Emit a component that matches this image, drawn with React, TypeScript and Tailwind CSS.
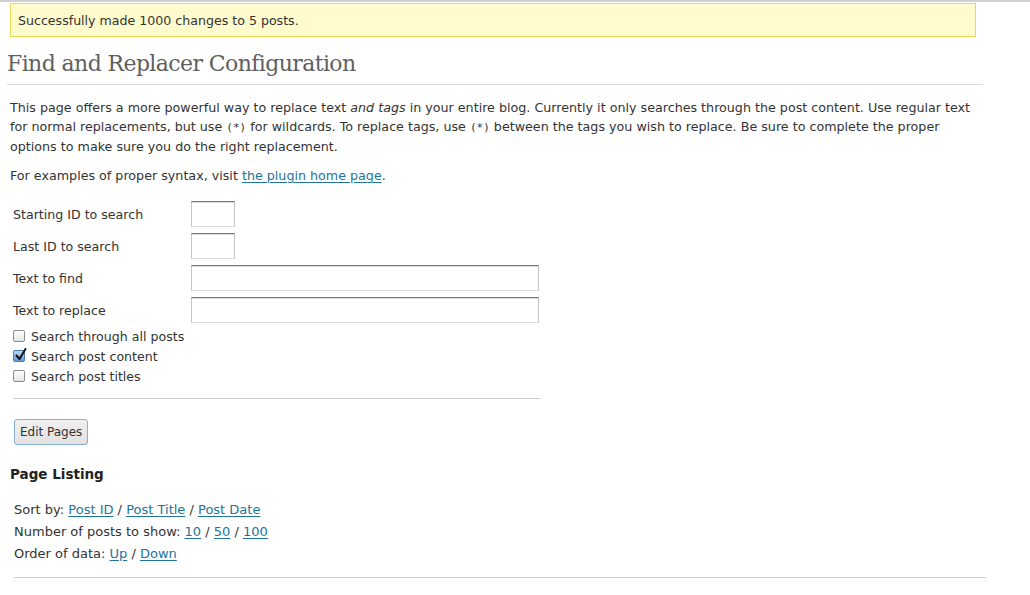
import React from "react";

function Box({ checked }: { checked?: boolean }) {
  if (checked) {
    return (
      <span className="relative inline-block w-[12px] h-[12px] rounded-[2px] border border-[#4a7fb0] bg-gradient-to-b from-[#bcd8f3] to-[#5d9ad6] mr-[6px] shrink-0">
        <svg className="absolute left-[1px] top-[-3px]" width="12" height="13" viewBox="0 0 12 13">
          <path d="M1.5 7.5 L4.5 11 L10.5 1" fill="none" stroke="#111" strokeWidth="2" strokeLinecap="round" strokeLinejoin="round" />
        </svg>
      </span>
    );
  }
  return (
    <span className="inline-block w-[12px] h-[12px] rounded-[2px] border border-[#8a8a8a] bg-gradient-to-b from-[#ffffff] to-[#e4e4e4] mr-[6px] shrink-0" />
  );
}

function Input({ w }: { w: string }) {
  return (
    <div
      className={`${w} h-[26px] border border-t-[#7b7b7b] border-l-[#c4c4c4] border-r-[#c4c4c4] border-b-[#dddddd] bg-white shadow-[inset_0_1px_0_#d8d8d8]`}
    />
  );
}

const link = "text-[#21759b] underline underline-offset-2";

export default function App() {
  return (
    <div className="min-h-[595px] bg-white text-[#333] text-[12px] leading-[19px] font-['DejaVu_Sans',sans-serif]">
      <div className="h-[2px] bg-[#d0d0d0]" />
      <div className="pt-px">
        <div className="ml-[10px] w-[966px] h-[34px] border border-[#e6db55] bg-[#fffbcc] flex items-center pl-[7px] text-[12.6px]">
          Successfully made 1000 changes to 5 posts.
        </div>
      </div>
      <div className="ml-[7px] mr-[47px] mt-[12px] border-b border-[#dadada] pb-[5px]">
        <h2 className="font-['DejaVu_Serif',serif] text-[22px] leading-[30px] text-[#5f5f5f] tracking-[-0.6px]">
          Find and Replacer Configuration
        </h2>
      </div>
      <div className="pl-[10px] pr-[40px] mt-[13px] text-[12.7px]">
        <p>
          This page offers a more powerful way to replace text <em>and tags</em> in your entire blog. Currently it only searches through the post content. Use regular text for normal replacements, but use{" "}
          <code className="font-['DejaVu_Sans_Mono',monospace] text-[11px]">(*)</code> for wildcards. To replace tags, use{" "}
          <code className="font-['DejaVu_Sans_Mono',monospace] text-[11px]">(*)</code> between the tags you wish to replace. Be sure to complete the proper options to make sure you do the right replacement.
        </p>
        <p className="mt-[10px]">
          For examples of proper syntax, visit <a className={link}>the plugin home page</a>.
        </p>
      </div>
      <div className="pl-[13px] mt-[16px] w-[540px] text-[12.6px]">
        <div className="flex flex-col gap-[6px]">
          <div className="flex items-center h-[26px]">
            <span className="w-[178px] pt-px">Starting ID to search</span>
            <Input w="w-[44px]" />
          </div>
          <div className="flex items-center h-[26px]">
            <span className="w-[178px] pt-px">Last ID to search</span>
            <Input w="w-[44px]" />
          </div>
          <div className="flex items-center h-[26px]">
            <span className="w-[178px] pt-px">Text to find</span>
            <Input w="w-[348px]" />
          </div>
          <div className="flex items-center h-[26px]">
            <span className="w-[178px] pt-px">Text to replace</span>
            <Input w="w-[348px]" />
          </div>
        </div>
        <div className="mt-[3px] flex flex-col">
          <label className="flex items-center h-[20px]"><Box />Search through all posts</label>
          <label className="flex items-center h-[20px]"><Box checked />Search post content</label>
          <label className="flex items-center h-[20px]"><Box />Search post titles</label>
        </div>
        <div className="mt-[12px] h-px bg-[#cccccc] w-[527px]" />
      </div>
      <div className="pl-[14px] mt-[20px]">
        <button className="h-[26px] px-[5px] rounded-[3px] border border-[#88b0cf] bg-gradient-to-b from-[#f0f0f0] to-[#e2e2e2] text-[12px] text-[#333]">
          Edit Pages
        </button>
      </div>
      <h3 className="pl-[10px] mt-[19px] text-[13.5px] leading-[20px] font-bold text-[#222]">Page Listing</h3>
      <div className="pl-[14px] mt-[15px] leading-[22px] text-[13px]">
        <div>
          Sort by: <a className={link}>Post ID</a> / <a className={link}>Post Title</a> / <a className={link}>Post Date</a>
        </div>
        <div>
          Number of posts to show: <a className={link}>10</a> / <a className={link}>50</a> / <a className={link}>100</a>
        </div>
        <div>
          Order of data: <a className={link}>Up</a> / <a className={link}>Down</a>
        </div>
      </div>
      <div className="ml-[14px] mt-[12px] h-px w-[972px] bg-[#cccccc]" />
    </div>
  );
}
